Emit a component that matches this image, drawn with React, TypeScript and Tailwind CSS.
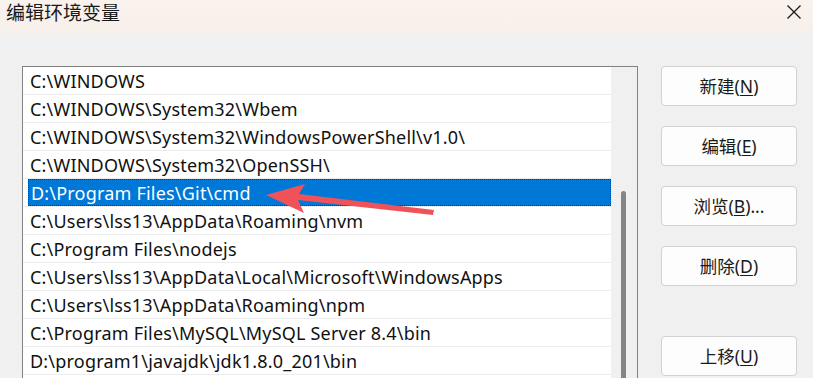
import React from "react";

const rows = [
  "C:\\WINDOWS",
  "C:\\WINDOWS\\System32\\Wbem",
  "C:\\WINDOWS\\System32\\WindowsPowerShell\\v1.0\\",
  "C:\\WINDOWS\\System32\\OpenSSH\\",
  "D:\\Program Files\\Git\\cmd",
  "C:\\Users\\lss13\\AppData\\Roaming\\nvm",
  "C:\\Program Files\\nodejs",
  "C:\\Users\\lss13\\AppData\\Local\\Microsoft\\WindowsApps",
  "C:\\Users\\lss13\\AppData\\Roaming\\npm",
  "C:\\Program Files\\MySQL\\MySQL Server 8.4\\bin",
  "D:\\program1\\javajdk\\jdk1.8.0_201\\bin",
];

const font = { fontFamily: '"Noto Sans", "Noto Sans CJK SC", sans-serif' };

function Btn({ label, k, suffix = "", className = "" }: { label: string; k: string; suffix?: string; className?: string }) {
  return (
    <div
      className={`w-[136px] h-[40px] shrink-0 rounded-[4px] border border-[#d1d1d1] bg-[#fdfdfd] flex items-center justify-center text-[17.5px] text-[#1a1a1a] ${className}`}
    >
      <span>
        {label}(<span className="underline underline-offset-2">{k}</span>){suffix}
      </span>
    </div>
  );
}

export default function App() {
  return (
    <div className="w-[813px] h-[378px] overflow-hidden bg-[#f0f0f0] relative" style={font}>
      <div className="h-[33px] bg-gradient-to-b from-[#faf2ed] to-[#f6efea] flex items-center justify-between pl-[6px] pr-[10px]">
        <span className="text-[19px] text-[#1a1a1a] leading-none -mt-[7px]">编辑环境变量</span>
        <svg width="16" height="16" viewBox="0 0 16 16" className="-mt-[10px] mr-[1px]">
          <path d="M1.5 1.5 L14.5 14.5 M14.5 1.5 L1.5 14.5" stroke="#1a1a1a" strokeWidth="1.3" />
        </svg>
      </div>
      <div className="flex pl-[22px] pt-[33px]">
        <div className="w-[616px] h-[330px] shrink-0 border border-[#828282] bg-white flex">
          <div className="w-[588px] shrink-0">
            {rows.map((r, i) => {
              const sel = i === 4;
              return (
                <div key={i} className="h-[28px] border-b border-[#ececec] flex">
                  <div
                    className={
                      sel
                        ? "ml-[5px] flex-1 bg-[#0078d7] text-white flex items-center pl-[2px] pt-[1px] border border-dotted border-[#0a3d6b] text-[18px] tracking-[0.2px]"
                        : "flex-1 flex items-center pl-[7px] pt-[2px] text-[18px] tracking-[0.2px] text-[#111]"
                    }
                  >
                    {r}
                  </div>
                </div>
              );
            })}
          </div>
          <div className="flex-1 bg-[#f0f0f0] relative">
            <div className="absolute left-[10px] top-[124px] w-[5px] h-[300px] rounded-t-full bg-[#858585]" />
          </div>
        </div>
        <div className="ml-[23px] flex flex-col">
          <Btn label="新建" k="N" />
          <Btn label="编辑" k="E" className="mt-[20px]" />
          <Btn label="浏览" k="B" suffix="..." className="mt-[20px]" />
          <Btn label="删除" k="D" className="mt-[20px]" />
          <Btn label="上移" k="U" className="mt-[50px]" />
        </div>
      </div>
      <svg className="absolute left-0 top-0 pointer-events-none" width="813" height="378">
        <polygon
          points="266,195 305,184 299,194 434,210 433,215 298,200 304,213"
          fill="#f0525a"
        />
      </svg>
    </div>
  );
}
